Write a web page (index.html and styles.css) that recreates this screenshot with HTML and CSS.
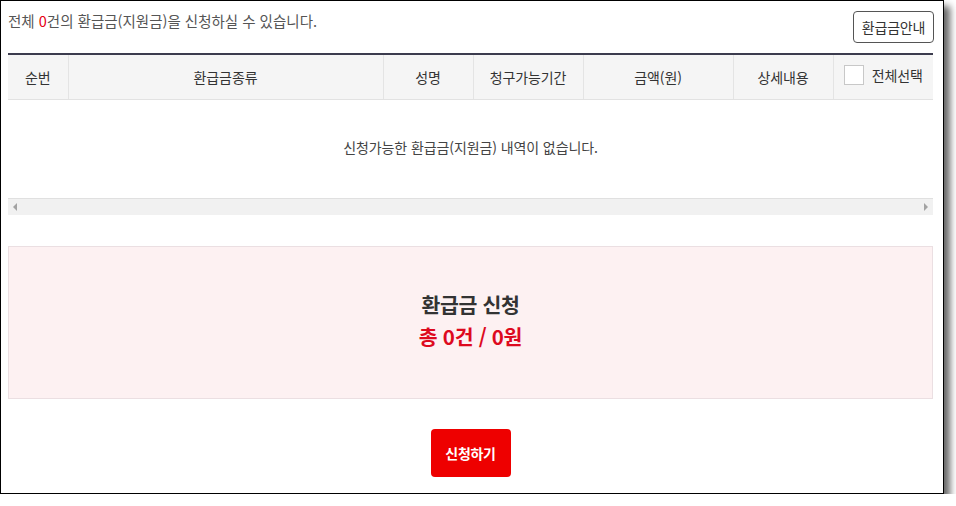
FILE: index.html
```html
<!DOCTYPE html>
<html lang="ko">
<head>
<meta charset="utf-8">
<title>환급금 신청</title>
<link rel="stylesheet" href="styles.css">
</head>
<body>
<div class="window">
  <div class="topbar">
    <p class="summary">전체 <span class="red">0</span>건의 환급금(지원금)을 신청하실 수 있습니다.</p>
    <button class="guide-btn" type="button">환급금안내</button>
  </div>
  <div class="table-wrap">
    <table class="list">
      <colgroup>
        <col class="c1"><col class="c2"><col class="c3"><col class="c4"><col class="c5"><col class="c6"><col class="c7">
      </colgroup>
      <thead>
        <tr>
          <th>순번</th>
          <th>환급금종류</th>
          <th>성명</th>
          <th>청구가능기간</th>
          <th>금액(원)</th>
          <th>상세내용</th>
          <th><span class="check-all"><span class="checkbox"></span>전체선택</span></th>
        </tr>
      </thead>
      <tbody>
        <tr>
          <td class="empty" colspan="7">신청가능한 환급금(지원금) 내역이 없습니다.</td>
        </tr>
      </tbody>
    </table>
    <div class="hscroll">
      <span class="arrow left"></span>
      <span class="arrow right"></span>
    </div>
  </div>
  <div class="total-box">
    <p class="total-title">환급금 신청</p>
    <p class="total-value">총 0건 / 0원</p>
  </div>
  <div class="actions">
    <button class="apply-btn" type="button">신청하기</button>
  </div>
</div>
</body>
</html>
```
FILE: styles.css
```css
html, body {
  margin: 0;
  padding: 0;
  background: #ffffff;
}
body {
  font-family: "Noto Sans CJK KR", "Noto Sans", sans-serif;
  color: #444;
}
.window {
  box-sizing: border-box;
  width: 944px;
  height: 494px;
  border: 1px solid #000;
  background: #fff;
  padding: 0 10px 0 7px;
  box-shadow: 6px 6px 7px rgba(0, 0, 0, 0.6);
}
.topbar {
  display: flex;
  justify-content: space-between;
  align-items: flex-start;
  padding-top: 10px;
  height: 42px;
  box-sizing: border-box;
}
.summary {
  margin: 0;
  font-size: 14.5px;
  line-height: 20px;
  letter-spacing: 0;
  color: #555;
}
.red {
  color: #e60012;
}
.guide-btn {
  font-family: inherit;
  font-size: 14px;
  letter-spacing: -0.2px;
  color: #333;
  background: #fff;
  border: 1px solid #555;
  border-radius: 4px;
  height: 32px;
  width: 81px;
  padding: 0;
  line-height: 30px;
  margin-right: -1px;
}
.table-wrap {
  margin-top: 10px;
}
.list {
  width: 925px;
  border-collapse: collapse;
  table-layout: fixed;
  border-top: 2px solid #3c3c4e;
}
.c1 { width: 60px; }
.c2 { width: 315px; }
.c3 { width: 90px; }
.c4 { width: 110px; }
.c5 { width: 150px; }
.c6 { width: 100px; }
.c7 { width: 100px; }
.list th {
  background: #f5f5f5;
  height: 44px;
  padding: 0;
  font-weight: normal;
  font-size: 14px;
  letter-spacing: -0.1px;
  color: #333;
  border-left: 1px solid #e4e4e4;
  border-bottom: 1px solid #e2e2e2;
}
.list th:first-child {
  border-left: none;
}
.check-all {
  display: inline-flex;
  align-items: center;
  gap: 8px;
}
.checkbox {
  display: inline-block;
  width: 18px;
  height: 18px;
  border: 1px solid #c8c8c8;
  background: #fff;
}
.empty {
  height: 98px;
  padding: 0 0 4px;
  box-sizing: border-box;
  text-align: center;
  font-size: 14px;
  letter-spacing: -0.1px;
  color: #444;
}
.hscroll {
  position: relative;
  width: 925px;
  height: 17px;
  box-sizing: border-box;
  background: #f1f1f1;
  border-top: 1px solid #e0e0e0;
}
.arrow {
  position: absolute;
  top: 4px;
  width: 0;
  height: 0;
  border-top: 4px solid transparent;
  border-bottom: 4px solid transparent;
}
.arrow.left {
  left: 5px;
  border-right: 4px solid #a3a3a3;
}
.arrow.right {
  right: 5px;
  border-left: 4px solid #a3a3a3;
}
.total-box {
  box-sizing: border-box;
  width: 925px;
  height: 153px;
  margin-top: 31px;
  background: #fdf1f2;
  border: 1px solid #ebdfe2;
  display: flex;
  flex-direction: column;
  align-items: center;
  justify-content: center;
  padding-bottom: 5px;
}
.total-title {
  margin: 0;
  font-size: 20.5px;
  font-weight: bold;
  line-height: 32px;
  color: #333;
  letter-spacing: -0.3px;
}
.total-value {
  margin: 0;
  font-size: 20.5px;
  font-weight: bold;
  line-height: 32px;
  color: #dd0a1e;
  letter-spacing: -0.3px;
}
.actions {
  display: flex;
  justify-content: center;
  margin-top: 30px;
}
.apply-btn {
  font-family: inherit;
  width: 80px;
  height: 48px;
  border: none;
  border-radius: 4px;
  background: #ee0000;
  color: #fff;
  font-size: 14px;
  font-weight: bold;
  letter-spacing: -0.3px;
  padding: 0;
}
```
